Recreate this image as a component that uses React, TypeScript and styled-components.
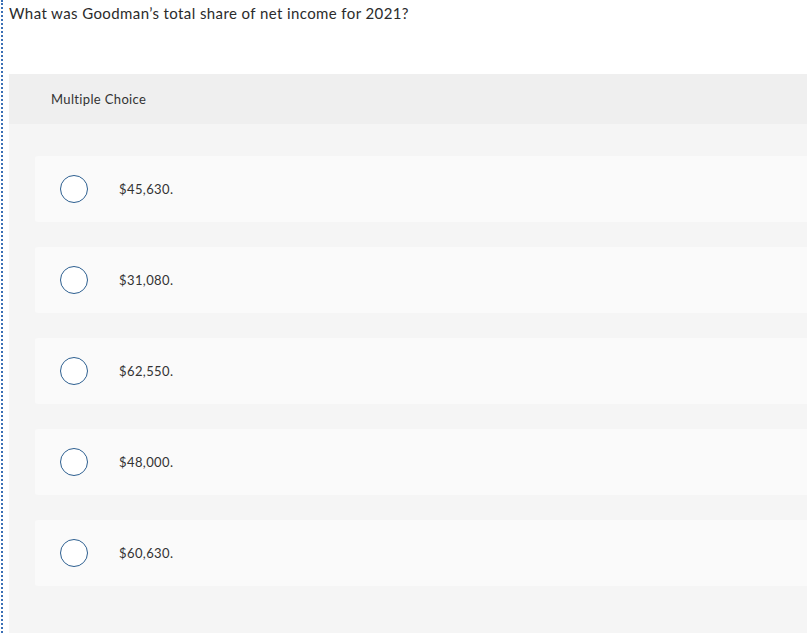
import React from "react";
import styled, { createGlobalStyle } from "styled-components";

const Global = createGlobalStyle`
  html, body { margin: 0; padding: 0; background: #ffffff; height: 100%; }
  body { font-family: Lato, "Open Sans", Arial, sans-serif; color: #333; overflow: hidden; }
`;

const Frame = styled.div`
  margin-left: 1px;
  border-left: 2px dotted #3a6fb5;
  padding-left: 6px;
  height: 100vh;
  box-sizing: border-box;
  display: flex;
  flex-direction: column;
  overflow: hidden;
`;

const Question = styled.p`
  margin: 0;
  padding-top: 3px;
  font-size: 15px;
  line-height: 20px;
  color: #2b2b2b;
  letter-spacing: 0.4px;
`;

const Panel = styled.section`
  margin-top: 51px;
  background: #f5f5f5;
  flex: 1;
`;

const PanelHeader = styled.div`
  height: 50px;
  background: #efefef;
  display: flex;
  align-items: center;
  padding-left: 42px;
  font-size: 13px;
  letter-spacing: 0.35px;
  color: #333;
`;

const Options = styled.div`
  display: flex;
  flex-direction: column;
  gap: 25px;
  padding: 32px 0 0 26px;
`;

const Card = styled.label`
  height: 66px;
  background: #fafafa;
  border-radius: 3px 0 0 3px;
  display: flex;
  align-items: center;
  padding-left: 25px;
  cursor: pointer;
`;

const Radio = styled.span`
  width: 26px;
  height: 26px;
  border: 1.6px solid #2d5f90;
  border-radius: 50%;
  background: #fff;
  flex: none;
`;

const Answer = styled.span`
  margin-left: 31px;
  font-size: 13px;
  color: #333;
  letter-spacing: 0.4px;
`;

const answers = ["$45,630.", "$31,080.", "$62,550.", "$48,000.", "$60,630."];

export default function App() {
  return (
    <>
      <Global />
      <Frame>
        <Question>What was Goodman’s total share of net income for 2021?</Question>
        <Panel>
          <PanelHeader>Multiple Choice</PanelHeader>
          <Options>
            {answers.map((a) => (
              <Card key={a}>
                <Radio />
                <Answer>{a}</Answer>
              </Card>
            ))}
          </Options>
        </Panel>
      </Frame>
    </>
  );
}
